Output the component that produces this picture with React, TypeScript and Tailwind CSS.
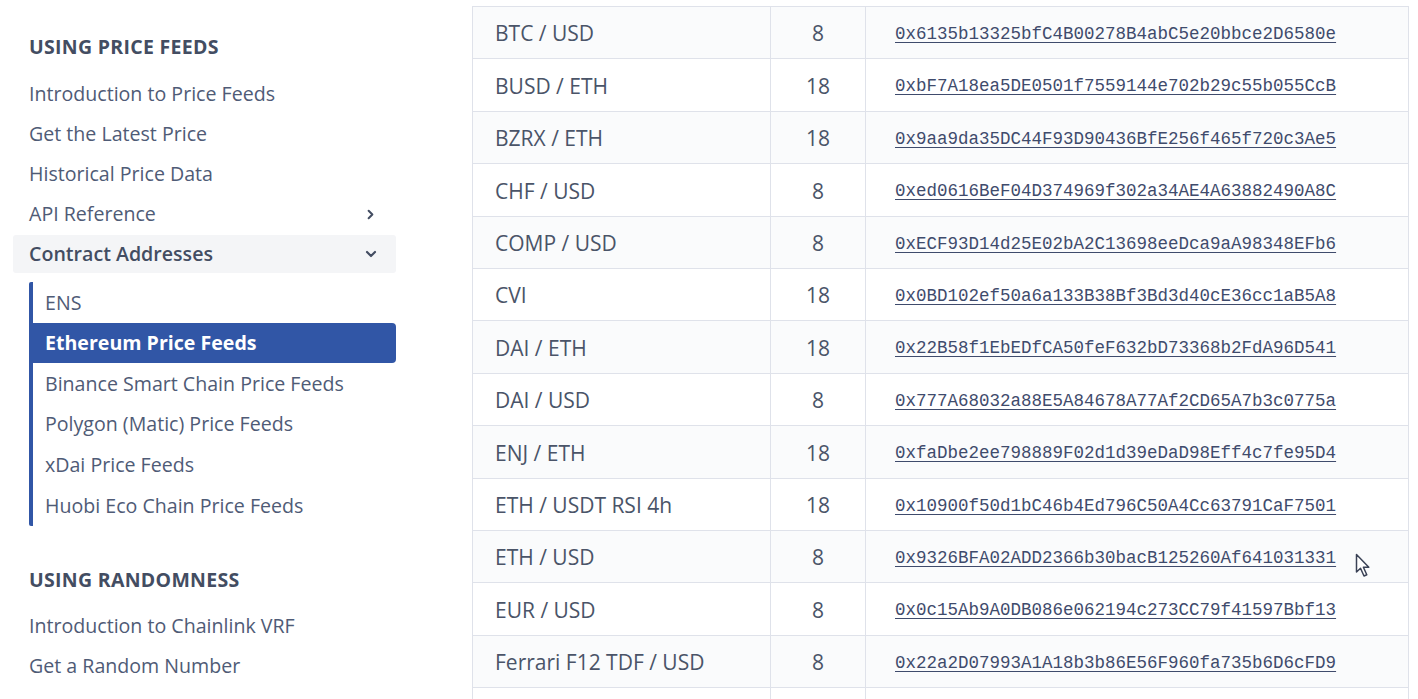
import { ChevronDown, ChevronRight } from 'lucide-react';

const feeds = [
  ['BTC / USD', '8', '0x6135b13325bfC4B00278B4abC5e20bbce2D6580e'],
  ['BUSD / ETH', '18', '0xbF7A18ea5DE0501f7559144e702b29c55b055CcB'],
  ['BZRX / ETH', '18', '0x9aa9da35DC44F93D90436BfE256f465f720c3Ae5'],
  ['CHF / USD', '8', '0xed0616BeF04D374969f302a34AE4A63882490A8C'],
  ['COMP / USD', '8', '0xECF93D14d25E02bA2C13698eeDca9aA98348EFb6'],
  ['CVI', '18', '0x0BD102ef50a6a133B38Bf3Bd3d40cE36cc1aB5A8'],
  ['DAI / ETH', '18', '0x22B58f1EbEDfCA50feF632bD73368b2FdA96D541'],
  ['DAI / USD', '8', '0x777A68032a88E5A84678A77Af2CD65A7b3c0775a'],
  ['ENJ / ETH', '18', '0xfaDbe2ee798889F02d1d39eDaD98Eff4c7fe95D4'],
  ['ETH / USDT RSI 4h', '18', '0x10900f50d1bC46b4Ed796C50A4Cc63791CaF7501'],
  ['ETH / USD', '8', '0x9326BFA02ADD2366b30bacB125260Af641031331'],
  ['EUR / USD', '8', '0x0c15Ab9A0DB086e062194c273CC79f41597Bbf13'],
  ['Ferrari F12 TDF / USD', '8', '0x22a2D07993A1A18b3b86E56F960fa735b6D6cFD9'],
  // 화면 아래로 잘리는 다음 행
  ['', '', ''],
];

const subItems = [
  'ENS',
  'Ethereum Price Feeds',
  'Binance Smart Chain Price Feeds',
  'Polygon (Matic) Price Feeds',
  'xDai Price Feeds',
  'Huobi Eco Chain Price Feeds',
];

export default function App() {
  return (
    <div className="relative flex h-[699px] w-[1418px] overflow-hidden bg-white font-['Open_Sans',sans-serif]">
      <Sidebar />

      {/* 주소 테이블 */}
      <div className="ml-[76px] pt-[6px]">
        <div className="w-[937px] border-l border-r border-t border-[#dfe2ea]">
          {feeds.map((feed, index) => (
            <FeedRow key={index} feed={feed} striped={index % 2 === 0} />
          ))}
        </div>
      </div>

      {/* 마우스 커서 */}
      <svg
        className="absolute left-[1355px] top-[553px]"
        width="16"
        height="26"
        viewBox="0 0 16 26"
      >
        <path
          d="M1.5 1.5 L1.5 19 L5.5 15.2 L9 23 L11.8 21.7 L8.4 14.2 L13.8 14.2 Z"
          fill="white"
          stroke="#3a4256"
          strokeWidth="1.5"
          strokeLinejoin="round"
        />
      </svg>
    </div>
  );
}

function Sidebar() {
  return (
    <div className="w-[396px] shrink-0 pt-[33px] pl-[13px] text-[#4f5b76]">
      <h3 className="h-[28px] pl-4 text-[19.5px] font-bold leading-[28px] tracking-[0.3px] text-[#434d62] uppercase">
        Using Price Feeds
      </h3>
      <div className="mt-[13px] flex flex-col text-[19.6px]">
        <NavItem label="Introduction to Price Feeds" />
        <NavItem label="Get the Latest Price" />
        <NavItem label="Historical Price Data" />
        <div className="flex h-10 items-center justify-between pr-[18px] pl-4">
          <span>API Reference</span>
          <ChevronRight size={15} strokeWidth={3.2} className="text-[#434d62]" />
        </div>
        <div className="my-px flex h-[38px] items-center justify-between rounded-[3px] bg-[#f4f5f7] pr-[17px] pl-4 font-semibold text-[#434d62]">
          <span>Contract Addresses</span>
          <ChevronDown size={16} strokeWidth={3.2} className="text-[#434d62]" />
        </div>

        {/* 하위 메뉴 */}
        <div className="mt-2 ml-4 flex flex-col rounded-l-[2px] border-l-4 border-[#3156a6]">
          {subItems.map((item) =>
            item === 'Ethereum Price Feeds' ? (
              <div
                key={item}
                className="flex h-[40.6px] items-center rounded-r-[4px] bg-[#3156a6] pl-3 font-bold text-white"
              >
                {item}
              </div>
            ) : (
              <div key={item} className="flex h-[40.6px] items-center pl-3">
                {item}
              </div>
            )
          )}
        </div>
      </div>

      <h3 className="mt-[40px] h-[28px] pl-4 text-[19.5px] font-bold leading-[28px] tracking-[0.3px] text-[#434d62] uppercase">
        Using Randomness
      </h3>
      <div className="mt-[12px] flex flex-col text-[19.6px]">
        <NavItem label="Introduction to Chainlink VRF" />
        <NavItem label="Get a Random Number" />
      </div>
    </div>
  );
}

function NavItem({ label }: { label: string }) {
  return <div className="flex h-10 items-center pl-4">{label}</div>;
}

function FeedRow({ feed, striped }: { feed: string[]; striped: boolean }) {
  return (
    <div
      className={`grid h-[52.4px] grid-cols-[298px_95px_542px] border-b border-[#dfe2ea] text-[21px] text-[#4a5468] ${
        striped ? 'bg-[#fafbfc]' : 'bg-white'
      }`}
    >
      <div className="flex items-center border-r border-[#dfe2ea] pt-[3px] pl-[22px]">{feed[0]}</div>
      <div className="flex items-center justify-center border-r border-[#dfe2ea] pt-[3px]">{feed[1]}</div>
      <div className="flex items-center pt-[3px] pl-[29px]">
        <a
          href="#"
          className="font-['Liberation_Mono',monospace] text-[17.5px] text-[#3f4b6c] underline underline-offset-[3px]"
        >
          {feed[2]}
        </a>
      </div>
    </div>
  );
}
